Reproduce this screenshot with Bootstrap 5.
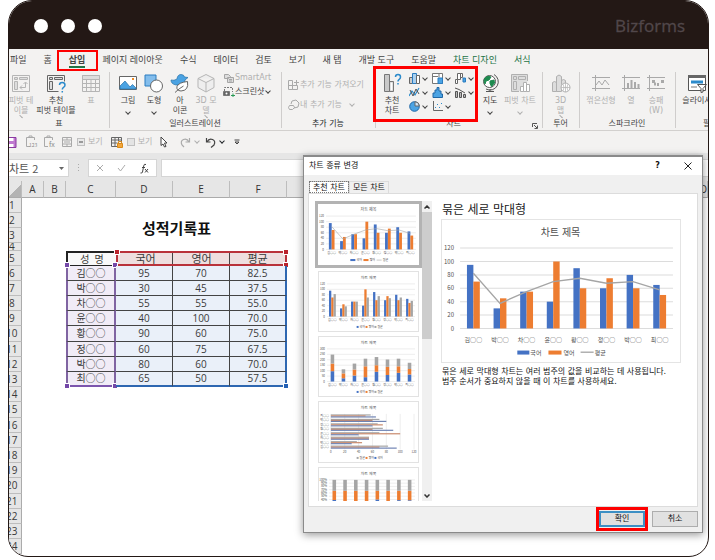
<!DOCTYPE html>
<html lang="ko">
<head>
<meta charset="utf-8">
<meta name="viewport" content="width=device-width, initial-scale=1">
<title>Bizforms - 차트 종류 변경</title>
<link href="https://cdn.jsdelivr.net/npm/bootstrap@5.3.0/dist/css/bootstrap.min.css" rel="stylesheet">
<style>
  :root{--ink:#231815;--dim:#b0b0b0;--red:#fe0000;--blue:#4472c4;--orange:#ed7d31;--grey:#a5a5a5}
  body{background:#fff;color:#444;font:8px/10px "DejaVu Sans","Noto Sans CJK KR",sans-serif;min-height:100vh;padding:0 6px 2px 8px}
  button{background:none;border:0;padding:0;color:inherit;font:inherit;line-height:inherit}
  svg{display:block;flex:none}
  .window-frame{border:1px solid var(--ink);border-radius:24px 24px 20px 20px;background:#fff;overflow:hidden;position:relative}
  .brandbar{background:var(--ink);height:49px;padding:2px 23px 0 25px;margin-top:-1px;border-top:1px solid #8b8b8b}
  .dot{width:14px;height:14px;border-radius:50%;background:#fff}
  .brand{font:17px/24px "Open Sans",sans-serif;color:#51474a;-webkit-text-stroke:.3px #51474a}
  .tabs{background:#f3f2f1;height:21px;font:9px/12px "Noto Sans CJK KR",sans-serif;gap:17px;padding:0 1px;white-space:nowrap}
  .tabs a{color:#444;text-decoration:none}
  .tabs a.chart-tab{color:#217346}
  .tabs a.active{font-weight:700;position:relative;box-shadow:0 2px 0 #217346}
  .tabs a.active::after,.hot::after{content:"";position:absolute;border:2px solid var(--red);pointer-events:none}
  .tabs a.active::after{inset:-4px -13px -5px -12px}
  .ribbon{display:grid;grid-template-columns:100fr 172fr 94fr 167fr 37fr 96fr minmax(0,33fr);background:#f3f2f1;height:60px}
  .grp{position:relative;display:flex;flex-direction:column;min-width:0;padding-top:3px}
  .grp+.grp::before{content:"";position:absolute;left:0;top:2px;bottom:2px;width:1px;background:#cfcdcc}
  .grp-tools{display:flex;height:46px}
  .grp-name{text-align:center;white-space:nowrap}
  .tool{display:flex;flex-direction:column;align-items:center;white-space:nowrap;text-align:center;justify-content:flex-start}
  .tool svg{width:20px;height:20px;margin-bottom:3px}
  .w24{width:24px}.w26{width:26px}.w34{width:34px}.w36{width:36px}.w46{width:46px}
  .off{color:var(--dim)}
  .chev{display:inline-block;width:4px;height:4px;border:solid currentColor;border-width:0 1px 1px 0;transform:rotate(45deg);margin:0 2px 2px}
  .hot{position:relative}
  .hot-charts::after{inset:-7px 0 -3px -2px;border-width:3px}
  .chart-grid{display:grid;grid-template-columns:repeat(3,23px);grid-auto-rows:14px;align-items:start;align-content:start}
  .chart-grid button{display:flex;align-items:center;gap:1px}
  .qat{background:#f3f2f1;border-top:1px solid #d2d0ce;height:23px}
  .qat input{width:8px;height:8px;margin:0 3px 0 0;appearance:none;border:1px solid #c0c0c0;background:#e4e4e4}
  .qat input:checked{background:#e9e9e9 linear-gradient(#9a9a9a,#9a9a9a) center/4px 2px no-repeat}
  .formula{background:#e6e6e6;padding:6px 0 4px;gap:4px}
  .fbox{height:18px;background:#fff;border:1px solid #d5d5d5}
  .namebox{width:60px;border-left:0;font:11px/16px "Noto Sans CJK KR",sans-serif;padding-right:4px}
  .namebox input{width:44px;border:0;padding:0;color:#555;background:none}
  .sheet{table-layout:fixed;width:100%;border-collapse:separate;border-spacing:0;color:#3a3a3a;font:10px/11px "Open Sans","Noto Sans CJK KR",sans-serif;margin-bottom:2px}
  .sheet th,.sheet td{padding:0;height:15px;text-align:center;vertical-align:middle;white-space:nowrap}
  .sheet thead th{height:17px;background:#e6e6e6;border-right:1px solid #bdbdbd;border-bottom:1px solid #ababab;font-weight:400;color:#333}
  .sheet thead th:last-child{text-align:right}
  .sheet tbody th{background:#e6e6e6;border-bottom:1px solid #bdbdbd;border-right:1px solid #ababab;font-weight:400;text-align:left}
  .sheet tbody tr:nth-child(n+10) th{text-indent:-3px}
  .sheet tbody tr:nth-child(5n+10)>*{height:16px}
  .sheet tr.thin>*{height:8px}
  .thin div{height:7px;line-height:6px;overflow:hidden}
  .corner{background:linear-gradient(135deg,#e6e6e6 55%,#b3b3b3 55%)!important}
  .sheet .doc-title{font:700 15px/20px "Noto Sans CJK KR",sans-serif;color:#111}
  .sheet .hd td:not(.void){font-size:11px;background:#eedfdf;border:solid #b9323a;border-width:2px 0;box-shadow:inset -1px 0 #444}
  .sheet .hd td.first:not(.void){background:#f8f8f8;font-size:10px;border:solid #222;border-width:2px 0 1px 2px;box-shadow:none;word-spacing:normal}
  .sheet .hd td:nth-child(4):not(.void){border-left-width:2px}
  .sheet .hd td:nth-child(6):not(.void){border-right-width:2px;box-shadow:none}
  .sheet .rec td:not(.void){background:#eaf0f9;border-bottom:1px solid #444;border-right:1px solid #444;position:relative}
  .sheet .rec td:nth-child(3):not(.void){background:#f1ecf7;border-left:2px solid #8064a2;border-right:2px solid #8064a2}
  .sheet .rec td:nth-child(6):not(.void){border-right:2px solid #2e67b1}
  .sheet .fin td:not(.void){border-bottom:2px solid #2e67b1}
  .sheet .fin td:nth-child(3):not(.void){border-bottom:2px solid #7c55ad}
  .hd td{position:relative}
  .knob{position:absolute;width:4px;height:4px;box-shadow:0 0 0 1px #fff;background:#b9232c}
  .knob.v{background:#7448a8}.knob.b{background:#2460b4}
  .k-tl{left:-3px;top:-3px}.k-tr{right:-3px;top:-3px}.k-br{right:-3px;bottom:-3px}.k-bl{left:-3px;bottom:-3px}
  .dlg{position:absolute;z-index:3;top:154px;right:5px;width:400px;background:#f0f0f0;border:1px solid #8a8a8a;border-top-width:2px;box-shadow:0 2px 8px rgba(0,0,0,.4);color:#111}
  .dlg-head{background:#fff;height:18px;padding:0 10px 0 5px}
  .dlg-tabs{padding:6px 5px 0}
  .dlg-tabs button{height:12px;padding:0 3px;border:1px solid #dcdcdc;border-bottom:0}
  .dlg-tabs button.sel{background:#fff;outline:1px dotted #777;outline-offset:-1px;border-color:#bbb}
  .pane{margin:0 4px;background:#fff;border:1px solid #dcdcdc;height:314px;padding:7px 0 5px 6px}
  .thumbs{width:107px;overflow:hidden;display:flex;flex-direction:column;gap:4px}
  .thumbs button{flex:none;border:1px solid #e2e2e2;margin:0 3px;background:#fff}
  .thumbs button.sel{border:3px solid #b3b3b3;margin:0 0 -1px;padding:0}
  .thumbs svg,.preview svg{width:100%}
  .sbar{width:10px;background:#f0f0f0;color:#333}
  .sbar button{height:11px;display:flex;align-items:center;justify-content:center}
  .sbar i{height:127px;background:#cdcdcd;display:block}
  .preview{margin-left:9px;width:240px}
  .preview h2{font:12px/16px "Noto Sans CJK KR",sans-serif;margin:0 0 2px 1px;color:#222}
  .chart-card{border:1px solid #e4e4e4}
  .preview p{margin:4px 0 0 1px;white-space:nowrap}
  .dlg-foot{padding:4px 4px 5px;gap:7px}
  .dlg-foot button{width:46px;height:16px;border:1px solid #adadad;background:#e1e1e1}
  .dlg-foot button.ok{border:2px solid #3c8fc4;position:relative}
  .dlg-foot .ok::after{inset:-6px -5px;border-width:3px}
  svg text{font-family:"Noto Sans CJK KR",sans-serif}
</style>
<script src="https://cdn.jsdelivr.net/npm/bootstrap@5.3.0/dist/js/bootstrap.bundle.min.js"></script>
</head>
<body>
<main class="window-frame">
  <header class="brandbar d-flex align-items-center justify-content-between">
    <div class="d-flex" style="gap:13px"><span class="dot"></span><span class="dot"></span><span class="dot"></span></div>
    <span class="brand">Bizforms</span>
  </header>

  <nav class="tabs d-flex align-items-center">
    <a href="#">파일</a><a href="#">홈</a><a href="#" class="active">삽입</a><a href="#">페이지 레이아웃</a><a href="#">수식</a><a href="#">데이터</a><a href="#">검토</a><a href="#">보기</a><a href="#">새 탭</a><a href="#">개발 도구</a><a href="#">도움말</a><a href="#" class="chart-tab">차트 디자인</a><a href="#" class="chart-tab">서식</a>
  </nav>

  <section class="ribbon">
    <div class="grp">
      <div class="grp-tools">
        <button class="tool off w24"><svg viewBox="0 0 20 20" fill="none" stroke="#b5b5b5"><path d="M1.500 2.500h17v16h-17z"/><path d="M3.500 4.500h3v2h-3zM8.500 4.500h8v2h-8zM3.500 8.500h3v8h-3z" fill="#ddd"/><path d="M9 14.500h5.500V9.500M12.500 11l2-2 2 2M11 12.500l-2 2 2 2"/></svg>피벗 테<br>이블<i class="chev"></i></button>
        <button class="tool w46"><svg viewBox="0 0 20 20" fill="none" stroke="#666"><path d="M12.500 18.500h-11v-16h17v6"/><path d="M3.500 4.500h3v2h-3zM8.500 4.500h8v2h-8zM3.500 8.500h3v8h-3z" fill="#ddd"/><path d="M13.500 12q0-2.500 2.700-2.500T19 12q0 1.500-1.500 2.300-1.200.7-1.200 2.200M16.300 18v1.500" stroke="#2b8acb" stroke-width="1.500"/></svg>추천<br>피벗 테이블</button>
        <button class="tool off w24"><svg viewBox="0 0 20 20" fill="none" stroke="#b5b5b5"><path d="M1.500 2.500h17v16h-17zM1.500 10.500h17M1.500 14.500h17M5.500 6v12.500M10 6v12.500M14.500 6v12.500"/><path d="M1.500 2.500h17v4h-17z" fill="#ddd"/></svg>표</button>
      </div>
      <div class="grp-name">표</div>
    </div>
    <div class="grp">
      <div class="grp-tools" style="padding-left:6px">
        <button class="tool w26"><svg viewBox="0 0 20 20"><path d="M1.500 3.500h17v13h-17z" fill="#fff" stroke="#666"/><path d="M2 16v-3l5-5 5 6 2.500-2.500L18 15v1z" fill="#4ba3e3" stroke="#2671a8" stroke-width=".7"/><rect x="14" y="5" width="2" height="2" fill="#f08a24"/></svg>그림<i class="chev mt-1"></i></button>
        <button class="tool w26"><svg viewBox="0 0 20 20"><path d="M1 2h11v11H1z" fill="#83bdec" stroke="#2b7cc0"/><circle cx="12.500" cy="13" r="6" fill="#fff" stroke="#666"/></svg>도형<i class="chev mt-1"></i></button>
        <button class="tool w26"><svg viewBox="0 0 20 20"><path d="M1 7q3 1 6-1 .5-4.500 4-4.500 3 0 3.500 2.500l3.500.500-3 2.500q0 4-4.500 5H6Q1 11 1 7z" fill="#4ba3e3" stroke="#2671a8" stroke-width=".7"/><path d="M17.500 8.500q1.500 9-6.500 9.500-5-.5-4-4.500 1.500-4 10.500-5zM5 19.500q4-4 8.500-6.500" fill="#fff" stroke="#666"/></svg>아<br>이콘</button>
        <button class="tool off w26"><svg viewBox="0 0 20 20" fill="#eee" stroke="#b5b5b5"><path d="M10 1.500l8 4v9l-8 4.500-8-4.500v-9zM2 5.500l8 4 8-4M10 9.500v9.500"/></svg>3D 모<br>델<i class="chev"></i></button>
        <div class="d-flex flex-column text-nowrap ms-1" style="gap:4px">
          <button class="d-flex align-items-center off"><svg width="12" height="10" viewBox="0 0 12 10" fill="#ddd" stroke="#a5a5a5"><path d="M1.500 1.500h4l2 2-2 2h-4zM4.500 4.500h6v5h-6z"/><path d="M6 6.500h3M6 8h3"/></svg>SmartArt</button>
          <button class="d-flex align-items-center"><svg width="12" height="10" viewBox="0 0 12 10" fill="none" stroke="#777"><path d="M1.500 4V.5h8V5" stroke-dasharray="2 1"/><path d="M.500 4.500h6v4h-6z" fill="#666"/><circle cx="3.500" cy="6.500" r="1" fill="#fff" stroke="none"/><path d="M8 8.500h4M10 6.500v4" stroke="#2a9a57"/></svg>스크린샷<i class="chev"></i></button>
        </div>
      </div>
      <div class="grp-name">일러스트레이션</div>
    </div>
    <div class="grp off">
      <div class="grp-tools flex-column text-nowrap" style="padding:6px 0 0 7px;gap:9px">
        <button class="d-flex align-items-center"><svg width="12" height="11" viewBox="0 0 12 11" fill="none" stroke="#a9a9a9"><path d="M.500 1.500h4v9h-4zM4.500 6.500H.5M4.500 6.500h5v4h-5zM6 3.500h5M8.500 1v5"/></svg>추가 기능 가져오기</button>
        <button class="d-flex align-items-center"><svg width="12" height="11" viewBox="0 0 12 11" fill="none" stroke="#a9a9a9"><path d="M3 5l1-3 4-1 3 3-1 4-4 1"/><path d="M1.500 6.500h4l1 2-2 2h-3l-1-2z"/></svg>내 추가 기능<i class="chev ms-2"></i></button>
      </div>
      <div class="grp-name text-dark">추가 기능</div>
    </div>
    <div class="grp">
      <div class="grp-tools">
        <div class="hot hot-charts d-flex" style="width:103px">
          <button class="tool w34"><svg viewBox="0 0 20 20"><path d="M2.500 1.500h5v17h-5zM7.500 8.500h4v10h-4z" fill="#c9c9c9" stroke="#777"/><path d="M8.500 9.500h2v8h-2z" fill="#fff"/><path d="M13.500 4q0-2.500 2.500-2.500t2.500 2.500q0 1.500-1.300 2.300T16 8.500M16 10v1.500" fill="none" stroke="#2b8acb" stroke-width="1.500"/></svg>추천<br>차트</button>
          <div class="chart-grid">
            <button aria-label="세로 막대형"><svg width="11" height="11" viewBox="0 0 11 11" stroke="#666"><path d="M.500 4.500h3v6h-3z" fill="#ccc"/><path d="M3.500.500h4v10h-4z" fill="#a8d0f0" stroke="#2b7cc0"/><path d="M7.500 2.500h3v8h-3z" fill="#fff"/></svg><i class="chev"></i></button>
            <button aria-label="트리맵"><svg width="11" height="11" viewBox="0 0 11 11" fill="#fff" stroke="#777"><path d="M.500.500h10v10H.5zM7 .5v4M.5 3.500H6"/><path d="M6 5h4.500v5.500H6z" fill="#4ba3e3" stroke="#2b7cc0"/></svg><i class="chev"></i></button>
            <button aria-label="폭포"><svg width="11" height="11" viewBox="0 0 11 11" fill="#fff" stroke="#666"><path d="M.500 6.500h2v4h-2zM2.500.500h3v6h-3zM5.500 .500h2v4h-2z"/><path d="M8 5h2.500v4H8z" fill="#4ba3e3" stroke="#2b7cc0"/></svg><i class="chev"></i></button>
            <button aria-label="꺾은선형"><svg width="11" height="11" viewBox="0 0 11 11" fill="none"><path d="M0 9l3-5 3 4 4-7" stroke="#2b8acb" stroke-width="1.200"/><path d="M1 3l3 6 3-7 3 5" stroke="#555"/></svg><i class="chev"></i></button>
            <button aria-label="히스토그램"><svg width="11" height="11" viewBox="0 0 11 11"><path d="M1 10.500V6h2V3h2V.500h2V4h2v3h1.500v3.500z" fill="#4ba3e3" stroke="#2067a5"/></svg><i class="chev"></i></button>
            <button aria-label="콤보"><svg width="11" height="11" viewBox="0 0 11 11" fill="#bbb" stroke="#555"><path d="M.500 4.500h2v6h-2zM4.500 5.500h2v5h-2zM8.500 7.500h2v3h-2z"/><path d="M0 1l4 1.500L10 6" fill="none"/></svg><i class="chev"></i></button>
            <button aria-label="원형"><svg width="11" height="11" viewBox="0 0 11 11"><circle cx="5.500" cy="5.500" r="4.800" fill="#4ba3e3" stroke="#2067a5"/><path d="M6 5V.700A4.500 4.500 0 0 1 10.300 5z" fill="#cfe5f7" stroke="#666"/></svg><i class="chev"></i></button>
            <button aria-label="분산형"><svg width="11" height="11" viewBox="0 0 11 11"><path d="M1.500 0v9.500H11" fill="none" stroke="#666"/><path d="M3 6h1v1H3zM5 3h1v1H5zM7 6h1v1H7zM9 2h1v1H9z" fill="#2b8acb"/></svg><i class="chev"></i></button>
          </div>
        </div>
        <button class="tool w24"><svg viewBox="0 0 20 20"><circle cx="9.500" cy="8.500" r="6" fill="#fff" stroke="#555"/><path d="M5 5q3-3 6-1l-2 3-3 1-1 3-1-3zM10 8l4-1 .5 3-3 3.500-1.500-3z" fill="#1d8a4e" stroke="#1d8a4e"/><path d="M14 1.500a8 8 0 0 1-8 14.500M10 16v2.500M6 18.500h8" fill="none" stroke="#555"/></svg>지도<i class="chev mt-1"></i></button>
        <button class="tool off w36"><svg viewBox="0 0 20 20" fill="#ddd" stroke="#b0b0b0"><path d="M9 18.500H1.500v-17h16V8M3.500 3.500h3v3h-3zM8.500 3.500h7v3h-7zM3.500 8.500h3v8h-3z"/><path d="M10.500 13.500h3v5h-3zM13.500 9.500h3v9h-3zM16.500 11.500h3v7h-3z" fill="#fff"/></svg>피벗 차트<i class="chev mt-1"></i></button>
      </div>
      <div class="d-flex"><div class="grp-name flex-grow-1">차트</div><svg class="mt-1 me-1" width="6" height="6" viewBox="0 0 6 6" fill="none" stroke="#555"><path d="M.500 4V.5H5M2 2l3 3M5.500 2.500v3h-3"/></svg></div>
    </div>
    <div class="grp">
      <div class="grp-tools justify-content-center"><button class="tool off w24"><svg viewBox="0 0 20 20" fill="#ddd" stroke="#b0b0b0"><path d="M1.500 9.500q2-2 4 0v9h-4zM5.500 3.500q2.500-3 5 0v15h-5zM10.500 7.500q2-2 4 0v4h-4z"/><circle cx="14.500" cy="14.500" r="4.500" fill="#fff"/><path d="M10 14.500h9M14.500 10v9M12 11q2 3.500 0 7M17 11q-2 3.500 0 7" fill="none" stroke-width=".7"/></svg>3D<br>맵<i class="chev"></i></button></div>
      <div class="grp-name">투어</div>
    </div>
    <div class="grp">
      <div class="grp-tools" style="padding-left:4px">
        <button class="tool off w36"><svg viewBox="0 0 20 20" fill="none" stroke="#a9a9a9"><path d="M1 4.500h18M1 15.500h18M4.500 2v16M5 12l3-4 3 4 3-5 4 5"/></svg>꺾은선형</button>
        <button class="tool off w24"><svg viewBox="0 0 20 20" fill="none" stroke="#a9a9a9"><path d="M1 4.500h18M1 15.500h18M3.500 2v16"/><path d="M7 10v5M10.500 7v8M14 9v6M17.500 11v4" stroke-width="2"/></svg>열</button>
        <button class="tool off w26"><svg viewBox="0 0 20 20" fill="none" stroke="#a9a9a9"><path d="M1 4.500h18M1 15.500h18M3.500 2v16"/><path d="M6 8.500h3M11 11.500h2M15 8.500h3M8 11h2" stroke-width="3"/></svg>승패<br>(W)</button>
      </div>
      <div class="grp-name">스파크라인</div>
    </div>
    <div class="grp">
      <div class="grp-tools" style="padding-left:10px"><button class="tool w24"><svg viewBox="0 0 20 20"><path d="M1.500 2.500h17v15h-17z" fill="#fff" stroke="#555"/><path d="M1 2h18v3H1z" fill="#666"/><path d="M4 7.500h12v3H4z" fill="#2b8acb"/><path d="M4 13h6v2H4z" fill="#bbb"/><path d="M10.500 11.500h9L16 15.500V19l-2 .5v-4z" fill="#fff" stroke="#555"/></svg>슬라이서</button></div>
      <div class="grp-name ps-4 ms-1">필터</div>
    </div>
  </section>

  <div class="qat d-flex align-items-center off">
    <svg width="8" height="11" viewBox="0 0 8 11"><path d="M0 .500h7v10H0" fill="#c07ad0" stroke="#8b3aa2"/><path d="M0 1h4.500v3H0zM0 7h4.500v3H0z" fill="#fff"/></svg>
    <svg class="ms-2" width="14" height="14" viewBox="0 0 14 14" fill="none" stroke="#a9a9a9"><path d="M5 11.500H1.500v-9h8V5M4 2.500V1h3v1.500"/><text x="4" y="12" font-size="5" fill="#888" stroke="none">123</text></svg>
    <svg width="14" height="14" viewBox="0 0 14 14" fill="none" stroke="#a9a9a9" class="ms-1"><path d="M5 11.500H1.500v-9h8V5M4 2.500V1h3v1.500"/><text x="6" y="12" font-size="7" fill="#888" stroke="none">fx</text></svg>
    <svg width="12" height="12" viewBox="0 0 12 12" fill="none" stroke="#a9a9a9" class="ms-1"><path d="M1.500 1.500h9v9h-9zM1.500 4h9M1.500 8h9M6 1.500V4M6 8v2.500M3 6h6"/></svg>
    <label class="d-flex align-items-center ms-1"><input type="checkbox" checked>보기</label>
    <svg width="12" height="12" viewBox="0 0 12 12" fill="none" stroke="#666" class="ms-2"><path d="M.500 1.500h10v9H.5zM.5 4h10M.5 7h6M4 1.500v9M7.500 1.500V5"/><path d="M6.500 7.500h5v4h-5z" fill="#f3a63b" stroke="#d98a1a"/><path d="M7.500 7V5.500h3V7" stroke="#d98a1a"/></svg>
    <label class="d-flex align-items-center ms-1"><input type="checkbox">보기</label>
    <svg width="8" height="12" viewBox="0 0 8 12" fill="#fff" stroke="#444" class="ms-2"><path d="M1 1l6 6H4.500L6 10.500l-1.500.500L3 8 1 9.500z"/></svg>
    <svg width="11" height="11" viewBox="0 0 11 11" fill="none" stroke="#aaa" stroke-width="1.200" style="margin-left:12px"><path d="M9.500 1v4h-4M9 5Q7 1 3.500 2.500T2 8l2 2"/></svg><i class="chev ms-1"></i>
    <svg width="11" height="11" viewBox="0 0 11 11" fill="none" stroke="#444" stroke-width="1.200" class="ms-1"><path d="M1.500 1v4h4M2 5q2-4 5.500-2.500T9 8l-3 2.500"/></svg><i class="chev ms-1 text-dark"></i>
    <svg width="6" height="6" viewBox="0 0 6 6" fill="none" stroke="#444" class="ms-2"><path d="M.500 1h5M1 3h4L3 5z"/></svg>
  </div>

  <div class="formula d-flex align-items-center">
    <div class="fbox namebox d-flex align-items-center justify-content-between"><input aria-label="이름 상자" value="차트 2"><svg width="5" height="3" viewBox="0 0 5 3"><path d="M0 0h5L2.500 3z" fill="#666"/></svg></div>
    <svg width="11" height="10" viewBox="0 0 11 10" fill="#aaa"><path d="M5 1h1v1H5zM5 4h1v1H5zM5 7h1v1H5z"/></svg>
    <div class="fbox d-flex align-items-center justify-content-around" style="width:69px">
      <svg width="8" height="8" viewBox="0 0 8 8" stroke="#aaa"><path d="M1 1l6 6M7 1L1 7"/></svg>
      <svg width="9" height="8" viewBox="0 0 9 8" fill="none" stroke="#aaa"><path d="M1 4l2.500 3L8 1"/></svg>
      <svg width="9" height="11" viewBox="0 0 9 11" fill="none" stroke="#444"><path d="M6 1.500q-2-1-2.300 1.500L2.500 9Q2 10.500.500 10M2 4.500h3M5 6l3 3.500M8 6L5 9.500"/></svg>
    </div>
    <input class="fbox flex-grow-1 border-end-0" aria-label="수식 입력줄" style="min-width:0">
  </div>

  <table class="sheet">
    <colgroup><col style="width:13px"><col style="width:22px"><col style="width:22px"><col style="width:50px"><col style="width:57px"><col style="width:57px"><col style="width:57px"><col span="9"></colgroup>
    <thead><tr><th class="corner"></th><th>A</th><th>B</th><th>C</th><th>D</th><th>E</th><th>F</th><th>G</th><th>H</th><th>I</th><th>J</th><th>K</th><th>L</th><th>M</th><th>N</th><th>O</th></tr></thead>
    <tbody>
      <tr><th>1</th><td colspan="15"></td></tr>
      <tr><th>2</th><td colspan="2"></td><td colspan="4" rowspan="2" class="doc-title">성적기록표</td><td colspan="9"></td></tr>
      <tr><th>3</th><td colspan="2"></td><td colspan="9"></td></tr>
      <tr class="thin"><th><div>4</div></th><td colspan="15"></td></tr>
      <tr class="hd"><th>5</th><td colspan="2" class="void"></td><td class="first">성&nbsp; 명</td><td>국어<b class="knob k-tl"></b></td><td>영어</td><td>평균<b class="knob k-tr"></b><b class="knob k-br"></b></td><td colspan="9" class="void"></td></tr>
      <tr class="rec"><th>6</th><td colspan="2" class="void"></td><td>김○○<b class="knob v k-tl"></b><b class="knob v k-tr"></b></td><td>95</td><td>70</td><td>82.5</td><td colspan="9" class="void"></td></tr>
      <tr class="rec"><th>7</th><td colspan="2" class="void"></td><td>박○○</td><td>30</td><td>45</td><td>37.5</td><td colspan="9" class="void"></td></tr>
      <tr class="rec"><th>8</th><td colspan="2" class="void"></td><td>차○○</td><td>55</td><td>55</td><td>55.0</td><td colspan="9" class="void"></td></tr>
      <tr class="rec"><th>9</th><td colspan="2" class="void"></td><td>윤○○</td><td>40</td><td>100</td><td>70.0</td><td colspan="9" class="void"></td></tr>
      <tr class="rec"><th>10</th><td colspan="2" class="void"></td><td>황○○</td><td>90</td><td>60</td><td>75.0</td><td colspan="9" class="void"></td></tr>
      <tr class="rec"><th>11</th><td colspan="2" class="void"></td><td>정○○</td><td>60</td><td>75</td><td>67.5</td><td colspan="9" class="void"></td></tr>
      <tr class="rec"><th>12</th><td colspan="2" class="void"></td><td>박○○</td><td>80</td><td>60</td><td>70.0</td><td colspan="9" class="void"></td></tr>
      <tr class="rec fin"><th>13</th><td colspan="2" class="void"></td><td>최○○<b class="knob v k-bl"></b><b class="knob v k-br"></b></td><td>65</td><td>50</td><td>57.5<b class="knob b k-br"></b></td><td colspan="9" class="void"></td></tr>
      <tr><th>14</th><td colspan="15"></td></tr><tr><th>15</th><td colspan="15"></td></tr><tr><th>16</th><td colspan="15"></td></tr><tr><th>17</th><td colspan="15"></td></tr><tr><th>18</th><td colspan="15"></td></tr><tr><th>19</th><td colspan="15"></td></tr><tr><th>20</th><td colspan="15"></td></tr><tr><th>21</th><td colspan="15"></td></tr><tr><th>22</th><td colspan="15"></td></tr><tr><th>23</th><td colspan="15"></td></tr><tr><th>24</th><td colspan="15"></td></tr>
    </tbody>
  </table>

  <section class="dlg" role="dialog" aria-label="차트 종류 변경">
    <div class="dlg-head d-flex align-items-center"><span class="me-auto">차트 종류 변경</span><button aria-label="도움말" class="fw-bold me-4">?</button><button aria-label="닫기"><svg width="8" height="8" viewBox="0 0 8 8" stroke="#222"><path d="M.500.500l7 7M7.500.500l-7 7"/></svg></button></div>
    <div class="dlg-tabs d-flex"><button class="sel">추천 차트</button><button>모든 차트</button></div>
    <div class="pane d-flex">
      <div class="thumbs">
        <button class="sel" aria-label="묶은 세로 막대형 콤보"><svg data-chart="combo" viewBox="0 0 100 60"></svg></button>
        <button aria-label="묶은 세로 막대형"><svg data-chart="cluster" viewBox="0 0 100 60"></svg></button>
        <button aria-label="누적 세로 막대형"><svg data-chart="stack" viewBox="0 0 100 60"></svg></button>
        <button aria-label="묶은 가로 막대형"><svg data-chart="bars" viewBox="0 0 100 60"></svg></button>
        <button aria-label="100% 누적 세로 막대형"><svg data-chart="percent" viewBox="0 0 100 60"></svg></button>
      </div>
      <div class="sbar d-flex flex-column"><button aria-label="위로"><svg width="6" height="4" viewBox="0 0 6 4" fill="none" stroke="#333" stroke-width="1.500"><path d="M.500 3.500L3 1l2.500 2.500"/></svg></button><i></i><button class="mt-auto" aria-label="아래로"><svg width="6" height="4" viewBox="0 0 6 4" fill="none" stroke="#333" stroke-width="1.500"><path d="M.500.500L3 3 5.500.500"/></svg></button></div>
      <div class="preview">
        <h2>묶은 세로 막대형</h2>
        <div class="chart-card"><svg data-chart="main" viewBox="0 0 237 141"></svg></div>
        <p>묶은 세로 막대형 차트는 여러 범주의 값을 비교하는 데 사용됩니다.<br>범주 순서가 중요하지 않을 때 이 차트를 사용하세요.</p>
      </div>
    </div>
    <div class="dlg-foot d-flex justify-content-end"><button class="ok hot">확인</button><button>취소</button></div>
  </section>
</main>

<script>
  const people = ['김○○','박○○','차○○','윤○○','황○○','정○○','박○○','최○○'];
  const kor = [95,30,55,40,90,60,80,65], eng = [70,45,55,100,60,75,60,50];
  const avg = kor.map((k, i) => (k + eng[i]) / 2);
  const B = '#4472c4', O = '#ed7d31', G = '#a5a5a5';
  const rect = (x, y, w, h, c) => `<rect x="${x}" y="${y}" width="${w}" height="${h}" fill="${c}"/>`;
  const line = (x1, y1, x2, y2, w) => `<path d="M${x1} ${y1}L${x2} ${y2}" stroke="#dcdcdc" stroke-width="${w}"/>`;
  const text = (x, y, s, t, a = 'middle', c = '#505050') => `<text x="${x}" y="${y}" font-size="${s}" text-anchor="${a}" fill="${c}">${t}</text>`;

  /* Vertical chart: o = plot box, scale and text sizes */
  function columns(o) {
    const y = v => o.y1 - (o.y1 - o.y0) * v / o.max, cw = (o.x1 - o.x0) / 8;
    let s = text(o.tx, o.ty, o.ts, '차트 제목');
    for (let v = 0; v <= o.max; v += o.step) s += line(o.x0, y(v), o.x1, y(v), o.lw) + text(o.x0 - o.gap, y(v) + o.fs * .35, o.fs, v + (o.unit || ''), 'end');
    people.forEach((p, i) => {
      const c = o.x0 + cw * (i + .5), set = [kor[i], eng[i], avg[i]];
      if (o.mode === 'stack') {
        const k = o.unit ? 100 / (set[0] + set[1] + set[2]) : 1;
        let base = 0;
        set.forEach((v, j) => { s += rect(c - o.bw / 2, y(base + v * k), o.bw, y(base) - y(base + v * k), [B, O, G][j]); base += v * k; });
      } else {
        const n = o.mode === 'combo' ? 2 : 3;
        for (let j = 0; j < n; j++) s += rect(c - n * o.bw / 2 + j * o.bw, y(set[j]), o.bw, o.y1 - y(set[j]), [B, O, G][j]);
      }
      s += text(c, o.cy, o.fs, p);
    });
    if (o.mode === 'combo') s += `<polyline fill="none" stroke="${G}" stroke-width="${o.sw}" points="${avg.map((v, i) => (o.x0 + cw * (i + .5)) + ',' + y(v)).join(' ')}"/>`;
    return s;
  }
  const small = { tx: 50, ty: 7, ts: 4, x0: 8, x1: 97, y0: 12, y1: 45, cy: 50, fs: 3, gap: 2, lw: .5, sw: .6, max: 120, step: 20 };
  const smallLegend = rect(38, 54.5, 2, 2, B) + text(41, 56.5, 3, '국어', 'start') + rect(47, 54.5, 2, 2, O) + text(50, 56.5, 3, '영어', 'start') + rect(56, 54.5, 2, 2, G) + text(59, 56.5, 3, '평균', 'start');

  function bars() {
    let s = text(50, 7, 4, '차트 제목');
    const x = v => 12 + 84 * v / 120;
    for (let v = 0; v <= 120; v += 20) s += line(x(v), 12, x(v), 48, .5) + text(x(v), 52, 3, v);
    for (let r = 0; r < 8; r++) {
      const i = 7 - r, y = 12.5 + r * 4.5;
      s += rect(12, y, x(avg[i]) - 12, 1.2, G) + rect(12, y + 1, x(eng[i]) - 12, 1.2, '#c98a6c') + rect(12, y + 2, x(kor[i]) - 12, 1.2, '#6f83b3') + text(10, y + 2.5, 3, people[i], 'end');
    }
    return s + rect(38, 55.5, 2, 2, G) + text(41, 57.5, 3, '평균', 'start') + rect(47, 55.5, 2, 2, O) + text(50, 57.5, 3, '영어', 'start') + rect(56, 55.5, 2, 2, B) + text(59, 57.5, 3, '국어', 'start');
  }
  const draw = {
    combo: () => columns({ ...small, mode: 'combo', bw: 2.8 }) + rect(32, 54.5, 5, 2, B) + text(38, 56.5, 3, '국어', 'start') + rect(45, 54.5, 5, 2, O) + text(51, 56.5, 3, '영어', 'start') + rect(58, 55.2, 5, .6, G) + text(64, 56.5, 3, '평균', 'start'),
    cluster: () => columns({ ...small, mode: 'cluster', bw: 2.3 }) + smallLegend,
    stack: () => columns({ ...small, mode: 'stack', bw: 3.6, max: 300, step: 50 }) + smallLegend,
    bars,
    percent: () => columns({ ...small, mode: 'stack', bw: 3.6, x0: 10, max: 100, step: 10, unit: '%' }),
    main: () => columns({ mode: 'combo', tx: 118, ty: 16, ts: 10, x0: 18, x1: 230, y0: 28, y1: 108, cy: 121, fs: 6, gap: 6, lw: 1, sw: 1.3, max: 120, step: 20, bw: 6.4 })
      + rect(75, 130, 12, 4, B) + text(88, 134, 6, '국어', 'start') + rect(106, 130, 13, 4, O) + text(121, 134, 6, '영어', 'start') + rect(138, 131, 13, 1.3, G) + text(152, 134, 6, '평균', 'start')
  };
  document.querySelectorAll('[data-chart]').forEach(el => { el.innerHTML = draw[el.dataset.chart](); });
</script>
</body>
</html>
